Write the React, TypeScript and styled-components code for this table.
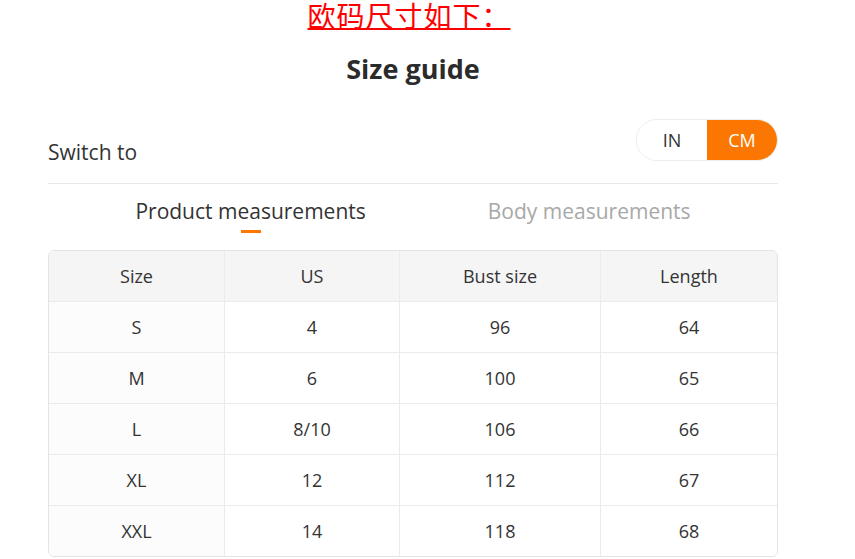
import { useState } from "react";
import styled, { createGlobalStyle } from "styled-components";

const Global = createGlobalStyle`
  html, body {
    margin: 0;
    padding: 0;
    background: #fff;
  }
  body {
    font-family: "Open Sans", "Noto Sans", sans-serif;
    color: #333;
  }
`;

const Page = styled.div`
  width: 730px;
  margin-left: 48px;
  display: flex;
  flex-direction: column;
`;

const Banner = styled.div`
  display: flex;
  justify-content: center;
  height: 32px;
  margin-left: -8px;
`;

const BannerText = styled.span`
  font-family: "Noto Sans CJK SC", sans-serif;
  font-size: 28px;
  line-height: 30px;
  color: #ff0000;
  text-decoration: underline;
  text-underline-offset: 1px;
  letter-spacing: 1px;
`;

const Title = styled.h1`
  margin: 18px 0 0;
  text-align: center;
  font-size: 27px;
  line-height: 38px;
  font-weight: 700;
  color: #2b2b2b;
`;

const SwitchRow = styled.div`
  display: flex;
  align-items: flex-end;
  justify-content: space-between;
  margin-top: 31px;
  padding-bottom: 22px;
  border-bottom: 1px solid #e8e8e8;
`;

const Label = styled.span`
  font-size: 21px;
  line-height: 26px;
  color: #333;
  margin-bottom: -4px;
`;

const Toggle = styled.div`
  display: flex;
  height: 42px;
  width: 142px;
  border: 1px solid #ececec;
  border-radius: 21px;
  overflow: hidden;
  box-sizing: border-box;
`;

const ToggleBtn = styled.button<{ active: boolean }>`
  flex: 1;
  border: 0;
  margin: 0;
  padding: 0;
  font-family: inherit;
  font-size: 18px;
  cursor: pointer;
  background: ${({ active }) => (active ? "#fb7701" : "#fff")};
  color: ${({ active }) => (active ? "#fff" : "#333")};
`;

const Tabs = styled.div`
  display: flex;
  justify-content: center;
  gap: 122px;
  margin-top: 13px;
`;

const Tab = styled.div<{ active: boolean }>`
  display: flex;
  flex-direction: column;
  align-items: center;
  font-size: 21px;
  line-height: 28px;
  color: ${({ active }) => (active ? "#333" : "#a8a8a8")};
  cursor: pointer;

  &::after {
    content: "";
    width: 20px;
    height: 3px;
    margin-top: 5px;
    background: ${({ active }) => (active ? "#fb7701" : "transparent")};
  }
`;

const Table = styled.div`
  display: grid;
  grid-template-columns: 176px 175px 201px 1fr;
  margin-top: 17px;
  border: 1px solid #e4e4e4;
  border-radius: 6px;
  overflow: hidden;
`;

const Cell = styled.div<{ head?: boolean; first?: boolean; last?: boolean; lastRow?: boolean }>`
  height: 50px;
  display: flex;
  align-items: center;
  justify-content: center;
  font-size: 18px;
  color: #333;
  background: ${({ head, first }) => (head ? "#f5f5f5" : first ? "#fcfcfc" : "#fff")};
  border-right: ${({ last }) => (last ? "0" : "1px solid #ebebeb")};
  border-bottom: ${({ lastRow }) => (lastRow ? "0" : "1px solid #ebebeb")};
`;

const head = ["Size", "US", "Bust size", "Length"];
const rows = [
  ["S", "4", "96", "64"],
  ["M", "6", "100", "65"],
  ["L", "8/10", "106", "66"],
  ["XL", "12", "112", "67"],
  ["XXL", "14", "118", "68"],
];

export default function App() {
  const [unit, setUnit] = useState<"IN" | "CM">("CM");
  const [tab, setTab] = useState(0);

  return (
    <>
      <Global />
      <Page>
        <Banner>
          <BannerText>欧码尺寸如下：</BannerText>
        </Banner>
        <Title>Size guide</Title>

        <SwitchRow>
          <Label>Switch to</Label>
          <Toggle>
            <ToggleBtn active={unit === "IN"} onClick={() => setUnit("IN")}>
              IN
            </ToggleBtn>
            <ToggleBtn active={unit === "CM"} onClick={() => setUnit("CM")}>
              CM
            </ToggleBtn>
          </Toggle>
        </SwitchRow>

        <Tabs>
          <Tab active={tab === 0} onClick={() => setTab(0)}>
            Product measurements
          </Tab>
          <Tab active={tab === 1} onClick={() => setTab(1)}>
            Body measurements
          </Tab>
        </Tabs>

        <Table>
          {head.map((h, i) => (
            <Cell key={h} head last={i === 3}>
              {h}
            </Cell>
          ))}
          {rows.map((r, ri) =>
            r.map((v, ci) => (
              <Cell
                key={`${ri}-${ci}`}
                first={ci === 0}
                last={ci === 3}
                lastRow={ri === rows.length - 1}
              >
                {v}
              </Cell>
            ))
          )}
        </Table>
      </Page>
    </>
  );
}
